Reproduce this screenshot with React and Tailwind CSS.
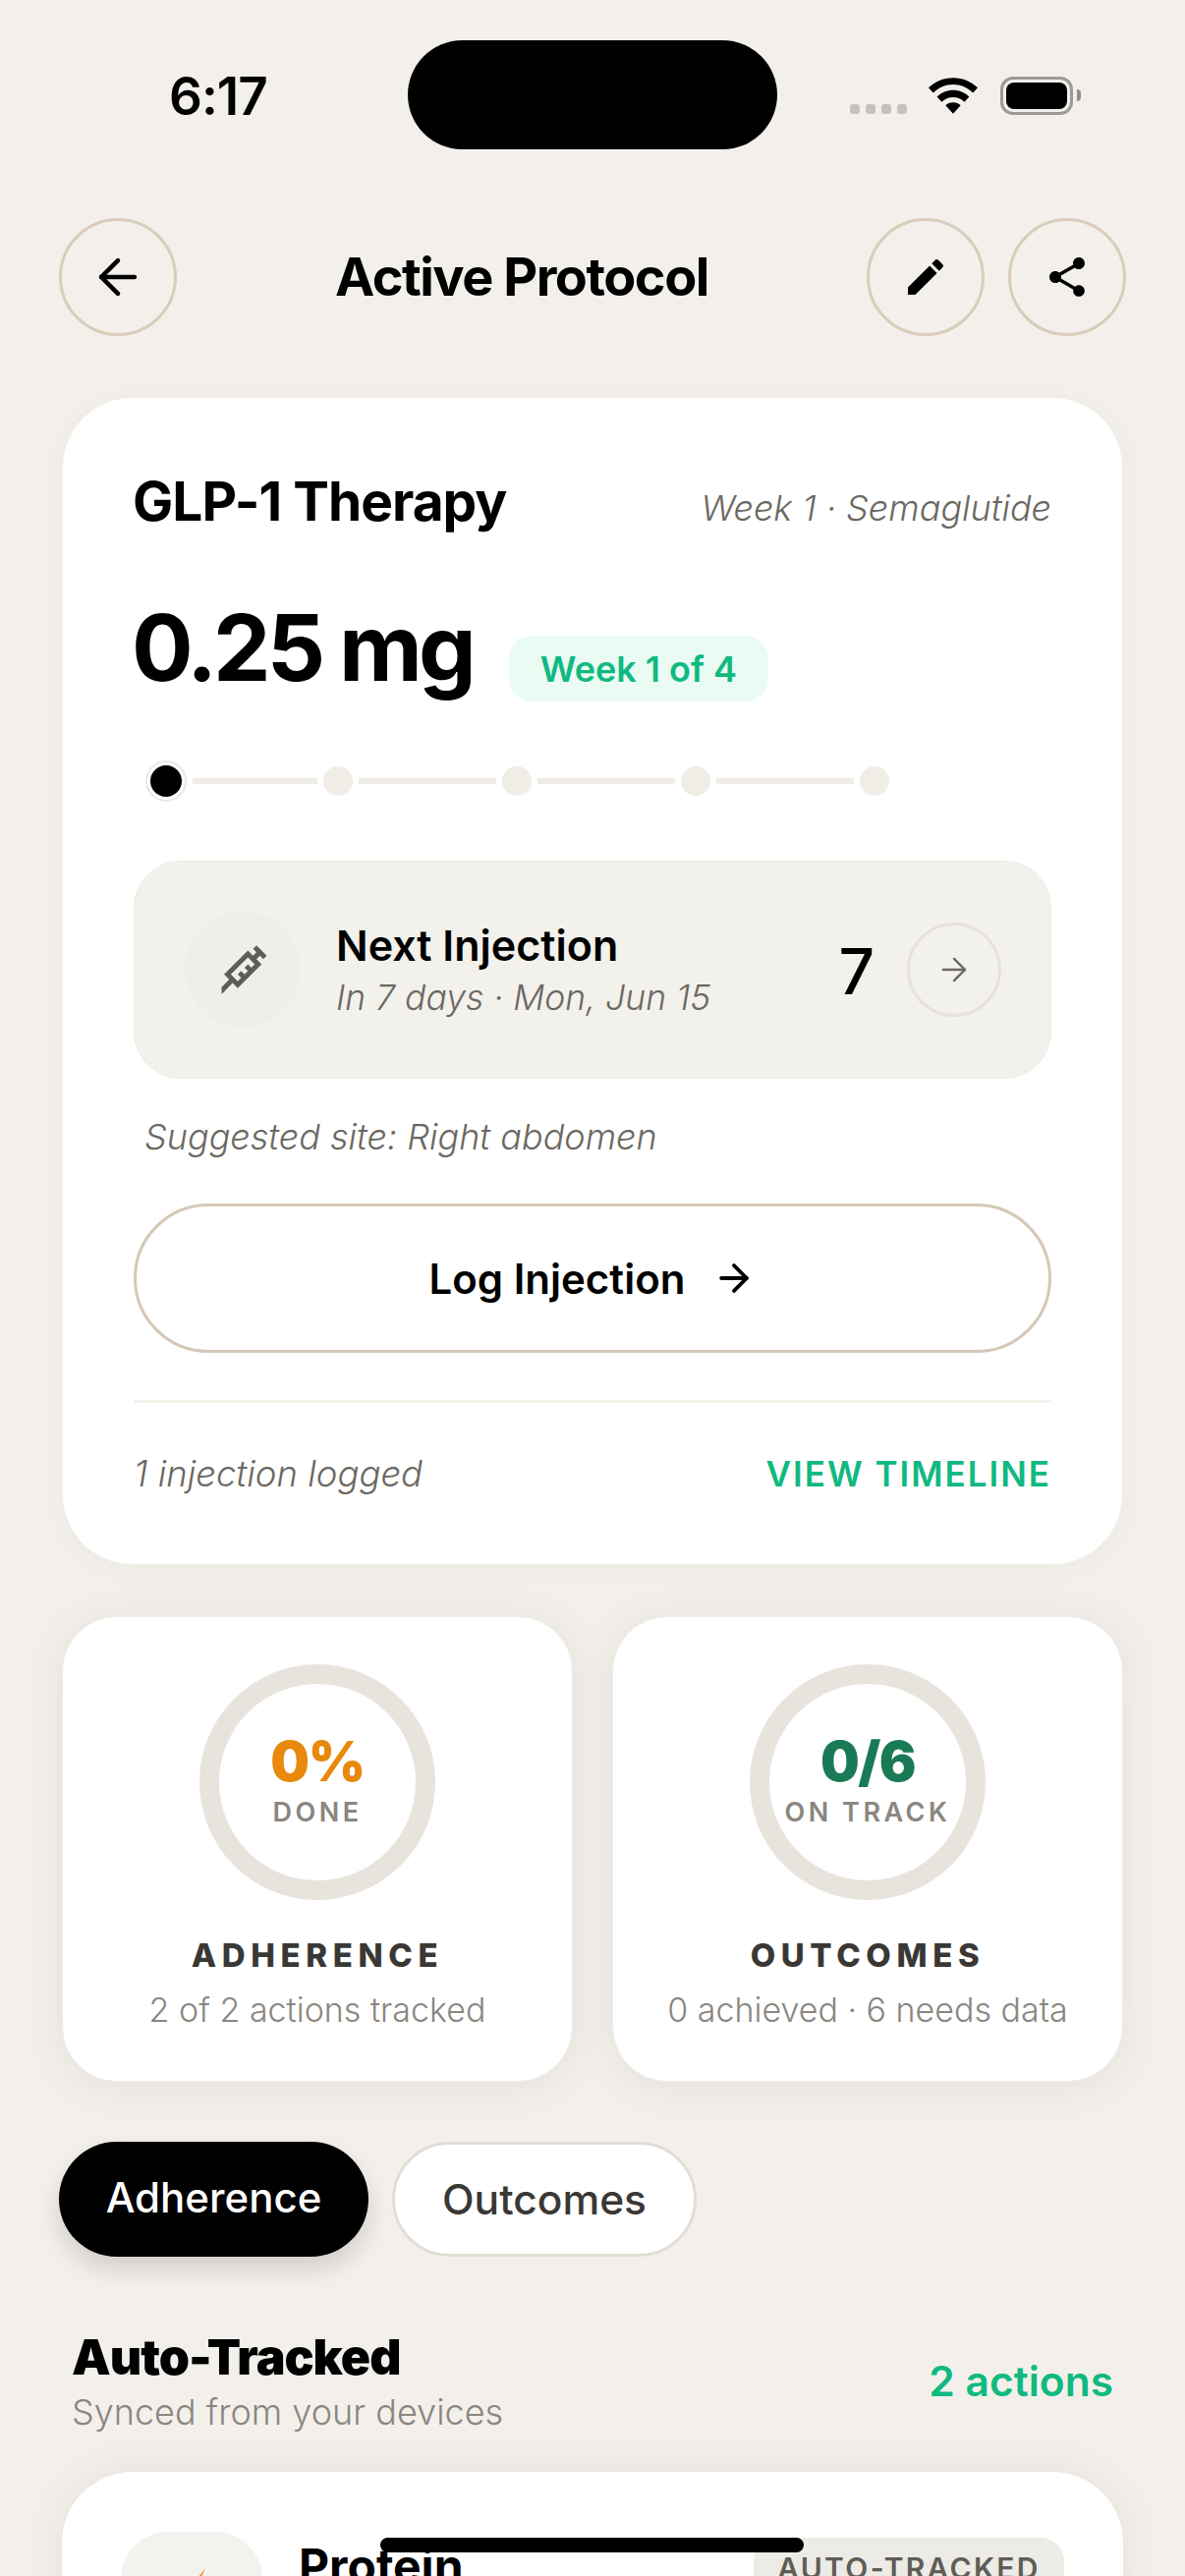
import React from 'react';
import { ArrowLeft, ArrowRight } from 'lucide-react';

const inter = "font-['Inter',sans-serif]";

const Ring = ({ value, label, color }) => (
  <div className="w-[240px] h-[240px] rounded-full border-[20px] border-[#e8e4dd] flex flex-col items-center justify-center">
    <div className={`text-[56px] leading-[60px] font-black tracking-[-1.5px] mt-[-4px] ${color}`}>{value}</div>
    <div className="text-[27px] leading-[32px] font-semibold tracking-[3.5px] text-[#8a8680] mt-[6px] whitespace-nowrap">{label}</div>
  </div>
);

const StatCard = ({ value, label, color, title, sub }) => (
  <div className="flex-1 h-[474px] bg-white rounded-[56px] border border-[#f0ede7] shadow-[0_4px_40px_rgba(120,110,90,0.12)] flex flex-col items-center pt-[48px]">
    <Ring value={value} label={label} color={color} />
    <div className="mt-[36px] text-[33px] leading-[40px] font-extrabold tracking-[5.6px] text-[#3a3835]">{title}</div>
    <div className="mt-[16px] text-[34px] leading-[40px] font-light text-[#8a8680] whitespace-nowrap">{sub}</div>
  </div>
);

const StepDot = ({ active }) =>
  active ? (
    <div className="w-[42px] h-[42px] rounded-full border-2 border-[#ebe8e2] flex items-center justify-center shrink-0">
      <div className="w-[32px] h-[32px] rounded-full bg-black" />
    </div>
  ) : (
    <div className="w-[30px] h-[30px] rounded-full bg-[#f0ede7] shrink-0" />
  );

const StepLine = ({ first }) => (
  <div className={first ? 'w-[127px] h-[6px] bg-[#f0ede7] mx-[6px] shrink-0' : 'w-[140px] h-[6px] bg-[#f0ede7] mx-[6px] shrink-0'} />
);

const IconButton = ({ children }) => (
  <button className="w-[120px] h-[120px] rounded-full border-[3px] border-[#d9ccb9] flex items-center justify-center text-black">
    {children}
  </button>
);

export default function App() {
  return (
    <div className={`w-[1206px] h-[2622px] overflow-hidden bg-[#f3f0eb] relative ${inter}`}>
      {/* status bar */}
      <div className="h-[222px] relative">
        <div className="absolute left-[172px] top-[66px] text-[53px] leading-[64px] font-semibold text-black tracking-[-1px]">6:17</div>
        <div className="absolute left-[415px] top-[41px] w-[376px] h-[111px] rounded-full bg-black" />
        <div className="absolute left-[865px] top-[106px] flex gap-[6px]">
          {[0, 1, 2, 3].map((i) => (
            <div key={i} className="w-[10px] h-[10px] rounded-[3px] bg-[#c4c2be]" />
          ))}
        </div>
        <svg className="absolute left-[944px] top-[79px]" width="52" height="37" viewBox="0 0 54 38" fill="black">
          <path d="M27 0C16.5 0 7.5 4 1 10.5l5 5.5C11.5 10.500 19 7 27 7s15.500 3.500 21 9l5-5.500C46.500 4 37.500 0 27 0z" />
          <path d="M27 13c-6.500 0-12.500 2.500-17 7l5 5.500c3-3 7.500-5 12-5s9 2 12 5l5-5.500c-4.500-4.500-10.500-7-17-7z" />
          <path d="M27 26c-3.200 0-6 1.200-8 3.200L27 38l8-8.800C33 27.200 30.200 26 27 26z" />
        </svg>
        <div className="absolute left-[1018px] top-[78px] w-[74px] h-[39px] rounded-[13px] border-[3px] border-[#9c9a95] p-[3px]">
          <div className="w-full h-full rounded-[8px] bg-black" />
        </div>
        <div className="absolute left-[1096px] top-[91px] w-[4px] h-[12px] rounded-r-full bg-[#8f8d88]" />
      </div>

      {/* header */}
      <div className="flex items-center pl-[60px] pr-[60px]">
        <IconButton><ArrowLeft size={58} strokeWidth={1.9} /></IconButton>
        <div className="flex-1 text-center text-[54px] leading-[68px] font-bold tracking-[-1.5px] text-black">Active Protocol</div>
        <div className="flex gap-[24px]">
          <IconButton>
            <svg width="48" height="48" viewBox="0 0 24 24" fill="black">
              <path d="M3 17.250V21h3.750L17.810 9.940l-3.750-3.750L3 17.250zM20.710 7.040a1 1 0 0 0 0-1.410l-2.340-2.340a1 1 0 0 0-1.410 0l-1.830 1.830 3.750 3.750 1.830-1.830z" />
            </svg>
          </IconButton>
          <IconButton>
            <svg width="48" height="48" viewBox="0 0 24 24" fill="black">
              <path d="M18 16.080c-.760 0-1.440.300-1.960.770L8.910 12.700c.050-.230.090-.460.090-.700s-.040-.470-.090-.700l7.050-4.110c.540.500 1.250.810 2.040.810 1.660 0 3-1.340 3-3s-1.340-3-3-3-3 1.340-3 3c0 .240.040.470.090.700L8.040 9.810C7.500 9.310 6.790 9 6 9c-1.660 0-3 1.340-3 3s1.340 3 3 3c.790 0 1.500-.310 2.040-.810l7.120 4.160c-.050.210-.080.430-.080.650 0 1.610 1.310 2.920 2.920 2.920s2.920-1.310 2.920-2.920-1.310-2.920-2.920-2.920z" />
            </svg>
          </IconButton>
        </div>
      </div>

      {/* protocol card */}
      <div className="mx-[63px] mt-[62px] h-[1189px] bg-white rounded-[72px] border border-[#f3f0ea] shadow-[0_4px_24px_rgba(120,110,90,0.05)] px-[72px] pt-[73px]">
        <div className="flex items-center justify-between">
          <div className="-ml-[1px] text-[55px] leading-[64px] font-bold tracking-[-1px] text-black">GLP-1 Therapy</div>
          <div className="mt-[14px] text-[36px] leading-[48px] font-light italic text-[#6b6862]">Week 1 · Semaglutide</div>
        </div>
        <div className="flex items-center h-[104px] mt-[65px]">
          <div className="-ml-[2px] text-[93px] leading-[104px] font-bold tracking-[-4px] text-black">0.25 mg</div>
          <div className="ml-[37px] mt-[43px] h-[67px] px-[32px] rounded-[24px] bg-[#e9fbf3] flex items-center text-[36px] font-semibold text-[#10b981]">Week 1 of 4</div>
        </div>
        <div className="flex items-center mt-[63px] pl-[12px]">
          <StepDot active />
          <StepLine first />
          <StepDot />
          <StepLine />
          <StepDot />
          <StepLine />
          <StepDot />
          <StepLine />
          <StepDot />
        </div>

        <div className="mt-[60px] h-[222px] rounded-[48px] bg-[#f3f1eb] border border-[#efece6] flex items-center pl-[51px] pr-[50px]">
          <div className="w-[118px] h-[118px] rounded-full bg-[#f0eee8] flex items-center justify-center">
            <svg width="59" height="59" viewBox="0 0 24 24" fill="#5f5d57">
              <path d="M11.150,15.180L9.730,13.770L11.150,12.350L12.560,13.770L13.970,12.350L12.560,10.940L13.970,9.530L15.390,10.940L16.800,9.530L13.970,6.700L6.900,13.770L9.730,16.600L11.150,15.180M3.080,19L6.200,15.890L4.080,13.770L13.970,3.870L16.100,6L17.500,4.580L16.100,3.160L17.500,1.750L21.750,6L20.340,7.400L18.920,6L17.500,7.400L19.630,9.530L9.730,19.420L7.610,17.300L3.080,22V19Z" />
            </svg>
          </div>
          <div className="ml-[36px] flex-1">
            <div className="text-[43px] leading-[52px] font-semibold text-black">Next Injection</div>
            <div className="text-[35.5px] leading-[46px] font-light italic text-[#6b6862] mt-[5px]">In 7 days · Mon, Jun 15</div>
          </div>
          <div className="text-[64px] font-medium text-black mr-[33px] mt-[3px]">7</div>
          <div className="w-[96px] h-[96px] rounded-full border-[3px] border-[#e6e2da] flex items-center justify-center text-[#6b6862]">
            <ArrowRight size={38} strokeWidth={1.5} />
          </div>
        </div>

        <div className="mt-[36px] ml-[11px] text-[36px] leading-[46px] font-light italic text-[#6b6862]">Suggested site: Right abdomen</div>

        <button className="mt-[45px] w-full h-[152px] rounded-full border-[3px] border-[#d4c8b6] flex items-center justify-center text-black">
          <span className="text-[42px] font-semibold">Log Injection</span>
          <ArrowRight size={44} strokeWidth={2.1} className="ml-[28px]" />
        </button>

        <div className="mt-[48px] h-[3px] bg-[#f3f0ea]" />

        <div className="flex items-center justify-between mt-[49px]">
          <div className="text-[36.5px] leading-[46px] font-light italic text-[#6b6862]">1 injection logged</div>
          <div className="text-[35px] leading-[46px] font-semibold tracking-[2px] text-[#10b981]">VIEW TIMELINE</div>
        </div>
      </div>

      {/* stat cards */}
      <div className="flex gap-[40px] mx-[63px] mt-[52px]">
        <StatCard value="0%" label="DONE" color="text-[#e8890c]" title="ADHERENCE" sub="2 of 2 actions tracked" />
        <StatCard value="0/6" label="ON TRACK" color="text-[#1a7a56]" title="OUTCOMES" sub="0 achieved · 6 needs data" />
      </div>

      {/* tabs */}
      <div className="flex gap-[24px] ml-[60px] mt-[61px]">
        <div className="h-[117px] w-[315px] rounded-full bg-black flex items-center justify-center text-[42px] font-medium text-white pb-[4px] shadow-[0_12px_24px_rgba(0,0,0,0.14)]">Adherence</div>
        <div className="h-[117px] w-[310px] rounded-full bg-white border-[3px] border-[#e2ddd4] flex items-center justify-center text-[42.5px] font-medium text-[#3a3835]">Outcomes</div>
      </div>

      {/* section header */}
      <div className="flex items-center justify-between ml-[73px] mr-[73px] mt-[72px]">
        <div>
          <div className="text-[50px] leading-[60px] font-black tracking-[-1px] text-black">Auto-Tracked</div>
          <div className="text-[36px] leading-[46px] font-light text-[#8a8680] mt-[3px]">Synced from your devices</div>
        </div>
        <div className="text-[42.5px] font-semibold text-[#10b981]">2 actions</div>
      </div>

      {/* tracked row, cut off by the viewport */}
      <div className="mx-[63px] mt-[38px] h-[300px] bg-white rounded-[72px] shadow-[0_0_40px_rgba(120,110,90,0.12)] relative">
        <div className="absolute left-[60px] top-[61px] w-[144px] h-[144px] rounded-[48px] bg-[#f3f2ee] flex items-center justify-center">
          <svg width="44" height="70" viewBox="0 0 44 70" fill="#f0a020">
            <path d="M36 0L4 40h16L10 70l30-42H24z" />
          </svg>
        </div>
        <div className="absolute left-[241px] top-[68px] text-[48px] leading-[56px] font-bold text-black">Protein</div>
        <div className="absolute right-[60px] top-[67px] h-[62px] w-[316px] rounded-[24px] bg-[#ecebe6] flex items-center justify-center text-[30px] font-semibold tracking-[2.3px] text-[#5f5d55]">AUTO-TRACKED</div>
      </div>

      {/* home indicator */}
      <div className="absolute left-[387px] top-[2583px] w-[431px] h-[15px] rounded-full bg-black" />
    </div>
  );
}
